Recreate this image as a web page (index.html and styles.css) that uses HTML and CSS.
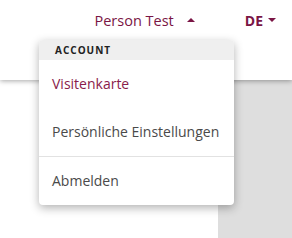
FILE: index.html
```html
<!DOCTYPE html>
<html>
<head>
<meta charset="utf-8">
<link rel="stylesheet" href="styles.css">
</head>
<body>
<header class="header">
  <nav class="nav">
    <span class="user">Person Test <span class="caret caret-up"></span></span>
    <span class="lang">DE <span class="caret caret-down"></span></span>
  </nav>
</header>
<main class="main">
  <div class="content"></div>
  <div class="side"></div>
</main>
<div class="dropdown">
  <div class="dd-head">ACCOUNT</div>
  <a class="dd-item active">Visitenkarte</a>
  <a class="dd-item">Persönliche Einstellungen</a>
  <div class="dd-divider"></div>
  <a class="dd-item">Abmelden</a>
</div>
</body>
</html>
```
FILE: styles.css
```css
html, body {
  margin: 0;
  padding: 0;
  width: 292px;
  height: 238px;
  overflow: hidden;
  font-family: "Open Sans", "Liberation Sans", sans-serif;
  background: #fff;
}
.header {
  position: relative;
  z-index: 2;
  height: 80px;
  background: #fff;
  box-shadow: 0 1px 5px rgba(0,0,0,0.35);
}
.nav {
  display: flex;
  justify-content: flex-end;
  align-items: center;
  height: 40px;
  padding-right: 16px;
  gap: 50px;
  color: #7a1545;
  font-size: 15px;
}
.user, .lang {
  display: flex;
  align-items: center;
}
.user { font-size: 14.5px; }
.user .caret { margin-left: 13px; }
.lang { font-weight: 700; font-size: 14px; }
.lang .caret { margin-left: 5px; }
.caret {
  width: 0;
  height: 0;
  border-left: 4px solid transparent;
  border-right: 4px solid transparent;
}
.caret-up { border-bottom: 4px solid #7a1545; }
.caret-down { border-top: 4px solid #7a1545; }
.main {
  display: flex;
  height: 158px;
}
.content { flex: 1; background: #fff; }
.side { width: 74px; background: #dedede; }
.dropdown {
  position: absolute;
  z-index: 3;
  left: 39px;
  top: 40px;
  width: 195px;
  background: #fff;
  border-radius: 4px;
  overflow: hidden;
  box-shadow: 0 3px 10px rgba(0,0,0,0.3);
}
.dd-head {
  height: 20px;
  line-height: 21px;
  background: #efefef;
  padding-left: 16px;
  font-size: 10px;
  font-weight: 700;
  letter-spacing: 1px;
  color: #222;
}
.dd-item {
  display: block;
  height: 48px;
  line-height: 47px;
  padding-left: 13px;
  font-size: 14px;
  color: #4a4a4a;
  white-space: nowrap;
}
.dd-item.active { color: #8a1c4c; }
.dd-divider {
  height: 1px;
  background: #e2e2e2;
}
```
